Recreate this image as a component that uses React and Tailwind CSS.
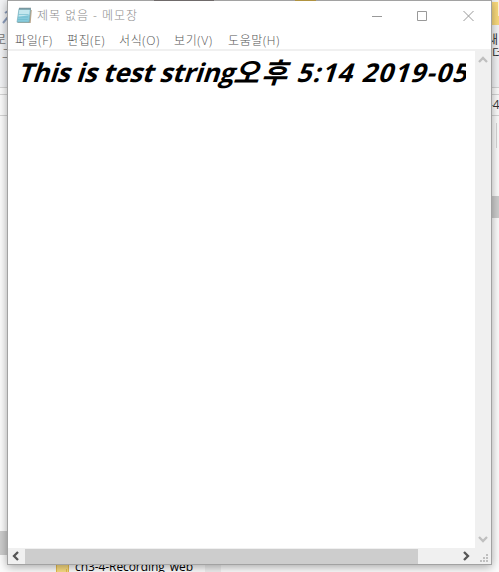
import React from 'react';

const MENUS = [
  ['파일(F)', 'w-[52px]'],
  ['편집(E)', 'w-[52px]'],
  ['서식(O)', 'w-[55px]'],
  ['보기(V)', 'w-[54px]'],
  ['도움말(H)', 'w-[60px]'],
];

function NotepadIcon() {
  return (
    <svg width="17" height="17" viewBox="0 0 17 17" className="shrink-0">
      <path d="M14 3h1.8l-1.1 13H2l-.3-1h11z" fill="#b9a68c" />
      <path d="M3 1.6h11.5l-1.4 13.6H1z" fill="#86cbdc" stroke="#6fa5b2" strokeWidth=".6" />
      <path d="M3.4 2.6h10.4l-.6 5.4-10.7 2z" fill="#c3e7ee" />
      <path d="M2.6 7.5h10M2.2 10H12M1.8 12.5h9.8" stroke="#69b7ca" strokeWidth=".6" />
      <path d="M4 .6v2.2M6 .6v2.2M8 .6v2.2M10 .6v2.2M12 .6v2.2M14 .6v2.2" stroke="#56656a" strokeWidth=".9" />
    </svg>
  );
}

function Chevron({ d, color, className = '' }) {
  return (
    <svg width="10" height="10" viewBox="0 0 10 10" className={className}>
      <path d={d} fill="none" stroke={color} strokeWidth="2.3" />
    </svg>
  );
}

function Folder({ className }) {
  return (
    <svg width="13" height="20" viewBox="0 0 13 20" className={className}>
      <path d="M0 0h12v20H0z" fill="#f9dc81" />
      <path d="M.5 0v20M12.5 3v17M10.5 11v9" stroke="#e7bd4e" />
    </svg>
  );
}

function Backdrop() {
  return (
    <div className="absolute inset-0 bg-[#fcfcfc] text-[12px] text-[#333]">
      <div className="h-[88px] border-b border-[#d5d5d5] bg-[#f3f4f6]" />
      <div className="h-[7px] border-b border-[#d5d5d5]" />
      <div className="h-[21px] border-b border-[#d5d5d5]" />
      <div className="absolute left-[-5px] top-[32px] leading-4 text-[#777]">로</div>
      <div className="absolute left-[2px] top-[47px] leading-4 text-[#777]">그</div>
      <svg className="absolute left-[2px] top-[10px]" width="6" height="14" viewBox="0 0 6 14">
        <path d="M1 13 6 7M3 3l3-2" stroke="#8d9ebd" strokeWidth="2" />
      </svg>
      <div className="absolute left-0 top-[531px] h-6 w-8 bg-[#cdcdcd]" />
      <div className="absolute left-[485px] top-[2px] h-[23px] w-[14px] bg-[#f9d97c]" />
      <div className="absolute left-[498px] top-0 h-4 w-px bg-[#fff5d8]" />
      <div className="absolute left-[487px] top-[33px] leading-[14px]">새</div>
      <div className="absolute left-[492px] top-[47px] leading-[14px]">더</div>
      <div className="absolute left-[489px] top-[97px] text-[12px] leading-4">-4</div>
      <div className="absolute left-[496px] top-[123px] h-[25px] w-px bg-[#d6d6d6]" />
      <div className="absolute left-[485px] top-[196px] h-[22px] w-[14px] bg-[#cdcdcd]" />
      <div className="absolute left-[205px] top-[560px] h-3 w-4 bg-[#efefef]" />
      <Folder className="absolute left-[56px] top-[558px]" />
      <div className="absolute left-[75px] top-[558px] whitespace-nowrap text-[12px] leading-[17px] tracking-[-0.08px] text-black">
        ch3-4-Recording_web
      </div>
    </div>
  );
}

export default function App() {
  return (
    <div className="relative h-[572px] w-[499px] overflow-hidden font-['Open_Sans','Noto_Sans_CJK_KR',sans-serif]">
      <Backdrop />
      <div className="absolute left-[7px] top-0 flex h-[565px] w-[485px] flex-col border border-[#a2a2a2] bg-white shadow-[0_2px_9px_rgba(0,0,0,0.35)]">
        <div className="absolute left-[146px] top-[-1px] h-px w-[60px] bg-[#6f6a6a]" />
        <div className="absolute left-[287px] top-[-1px] h-px w-[21px] bg-[#b09340]" />
        <header className="flex h-[29px] items-center pl-2 text-[#8c8c8c]">
          <NotepadIcon />
          <span className="ml-1 whitespace-nowrap text-[12px] font-light leading-4 tracking-[0.95px]">제목 없음 - 메모장</span>
          <svg className="ml-auto mr-[16px]" width="104" height="12" viewBox="0 0 104 12" fill="none" stroke="#999">
            <path d="M1 6.5h10M92.5 1l10 10M102.5 1l-10 10" />
            <path d="M46.5 1.5h9v9h-9z" />
          </svg>
        </header>
        <nav className="flex h-[21px] items-center border-b-2 border-[#f0f0f0] pl-[7px] pt-[3px] text-[12px] font-light leading-4 text-[#555]">
          {MENUS.map(([label, width]) => (
            <span key={label} className={`${width} shrink-0 whitespace-nowrap tracking-[0.6px]`}>{label}</span>
          ))}
        </nav>
        <div className="flex min-h-0 flex-1">
          <main className="min-w-0 flex-1 pl-[9px]">
            <div className="h-[44px] w-[449px] overflow-hidden">
              <div className="flex w-[600px] origin-[0_31px] -skew-x-[18deg] whitespace-pre text-[26px] font-bold leading-[42px] text-black">
                <span className="w-[216px] shrink-0 tracking-[-0.25px]">This is test string</span>
                <span className="w-[63px] shrink-0 text-[28px] tracking-[2.5px]">오후</span>
                <span className="w-[65px] shrink-0 tracking-[1.1px]">5:14</span>
                <span className="tracking-[1.3px]">2019-05</span>
              </div>
            </div>
          </main>
          <div className="flex w-4 flex-col items-center justify-between bg-[#f0f0f0] pb-1 pt-1">
            <Chevron d="M1 7l4-4 4 4" color="#bfbfbf" />
            <Chevron d="M1 3l4 4 4-4" color="#bfbfbf" />
          </div>
        </div>
        <footer className="flex h-4 items-center bg-[#f0f0f0]">
          <Chevron d="M7 1L3 5l4 4" color="#555" className="ml-[3px] mr-1" />
          <div className="h-[15px] w-[393px] bg-[#cdcdcd]" />
          <Chevron d="M3 1l4 4-4 4" color="#555" className="ml-[43px]" />
          <svg className="ml-[9px] mt-[5px]" width="9" height="9" viewBox="0 0 9 9" fill="#bfbfbf">
            <path d="M6 0h2v2H6zM3 3h2v2H3zM6 3h2v2H6zM0 6h2v2H0zM3 6h2v2H3zM6 6h2v2H6z" />
          </svg>
        </footer>
      </div>
    </div>
  );
}
